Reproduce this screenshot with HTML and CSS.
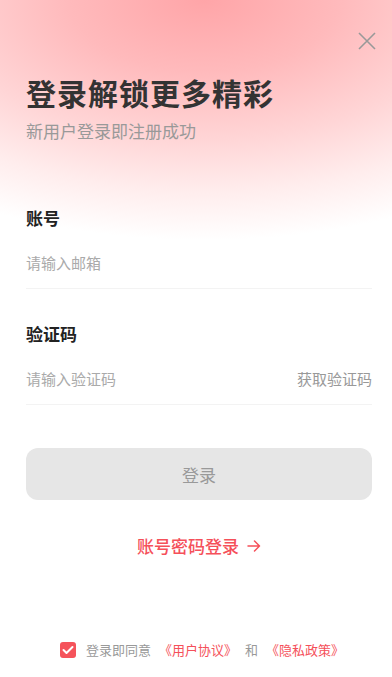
FILE: index.html
```html
<!DOCTYPE html>
<html lang="zh">
<head>
<meta charset="utf-8">
<title>登录</title>
<link rel="stylesheet" href="styles.css">
</head>
<body>
<div class="page">
  <button class="close" aria-label="关闭">
    <svg width="18" height="18" viewBox="0 0 18 18"><path d="M1 1L17 17M17 1L1 17" stroke="#999" stroke-width="1.6" fill="none"/></svg>
  </button>
  <header class="header">
    <h1 class="title">登录解锁更多精彩</h1>
    <p class="subtitle">新用户登录即注册成功</p>
  </header>
  <form class="form">
    <div class="field">
      <label class="label">账号</label>
      <div class="input-row"><span class="placeholder">请输入邮箱</span></div>
    </div>
    <div class="field field-code">
      <label class="label">验证码</label>
      <div class="input-row"><span class="placeholder">请输入验证码</span><span class="get-code">获取验证码</span></div>
    </div>
    <div class="btn">登录</div>
    <div class="alt">账号密码登录<svg class="arrow" width="14" height="12" viewBox="0 0 14 12"><path d="M1 6H12.5M7.5 1L12.5 6L7.5 11" stroke="#f5505a" stroke-width="1.5" fill="none" stroke-linecap="round" stroke-linejoin="round"/></svg></div>
  </form>
  <footer class="agree">
    <span class="check"><svg width="12" height="10" viewBox="0 0 12 10"><path d="M1.5 5L4.5 8L10.5 2" stroke="#fff" stroke-width="2" fill="none" stroke-linecap="round" stroke-linejoin="round"/></svg></span>
    <span class="agree-text">登录即同意</span>
    <span class="link">《用户协议》</span>
    <span class="agree-text">和</span>
    <span class="link">《隐私政策》</span>
  </footer>
</div>
</body>
</html>
```
FILE: styles.css
```css
* { box-sizing: border-box; margin: 0; padding: 0; }
html, body { width: 392px; height: 677px; }
body {
  font-family: "Noto Sans CJK SC", "Noto Sans", sans-serif;
  background: #fff;
  overflow: hidden;
}
.page {
  position: relative;
  width: 392px;
  height: 677px;
  display: flex;
  flex-direction: column;
  padding: 0 20px 0 26px;
  background: radial-gradient(ellipse 450px 240px at 52% 0%, #ffa5a8 0%, #ffbabc 30%, #ffd5d6 58%, #ffeded 80%, rgba(255,255,255,0) 100%), #fff;
}
.close {
  position: absolute;
  top: 32px;
  right: 16px;
  width: 18px;
  height: 18px;
  border: none;
  background: none;
  display: flex;
}
.header { padding-top: 72px; }
.title {
  font-size: 30px;
  line-height: 40px;
  font-weight: 700;
  color: #333;
  letter-spacing: 1px;
}
.subtitle {
  margin-top: 7px;
  font-size: 17px;
  line-height: 24px;
  color: #999;
}
.form { margin-top: 63px; display: flex; flex-direction: column; }
.field { display: flex; flex-direction: column; }
.field-code { margin-top: 33px; }
.label {
  font-size: 17px;
  line-height: 24px;
  font-weight: 700;
  color: #222;
}
.input-row {
  display: flex;
  justify-content: space-between;
  align-items: center;
  padding: 24px 0 16px;
  line-height: 18px;
  border-bottom: 1px solid #f3f3f3;
  font-size: 15px;
  color: #aaa;
}
.get-code { color: #999; }
.btn {
  margin-top: 43px;
  height: 52px;
  border-radius: 12px;
  background: #e6e6e6;
  color: #999;
  font-size: 17px;
  display: flex;
  align-items: center;
  justify-content: center;
}
.alt {
  margin-top: 34px;
  display: flex;
  align-items: center;
  justify-content: center;
  gap: 8px;
  font-size: 17px;
  font-weight: 500;
  color: #f5505a;
  line-height: 24px;
}
.agree {
  margin-top: auto;
  margin-bottom: 18px;
  display: flex;
  align-items: center;
  justify-content: center;
  gap: 8px;
  font-size: 13px;
  line-height: 18px;
  padding-left: 6px;
}
.check {
  width: 16px;
  height: 16px;
  border-radius: 3px;
  background: #f5535b;
  display: flex;
  align-items: center;
  justify-content: center;
  margin-right: 2px;
}
.agree-text { color: #999; }
.link { color: #f5505a; }
```
